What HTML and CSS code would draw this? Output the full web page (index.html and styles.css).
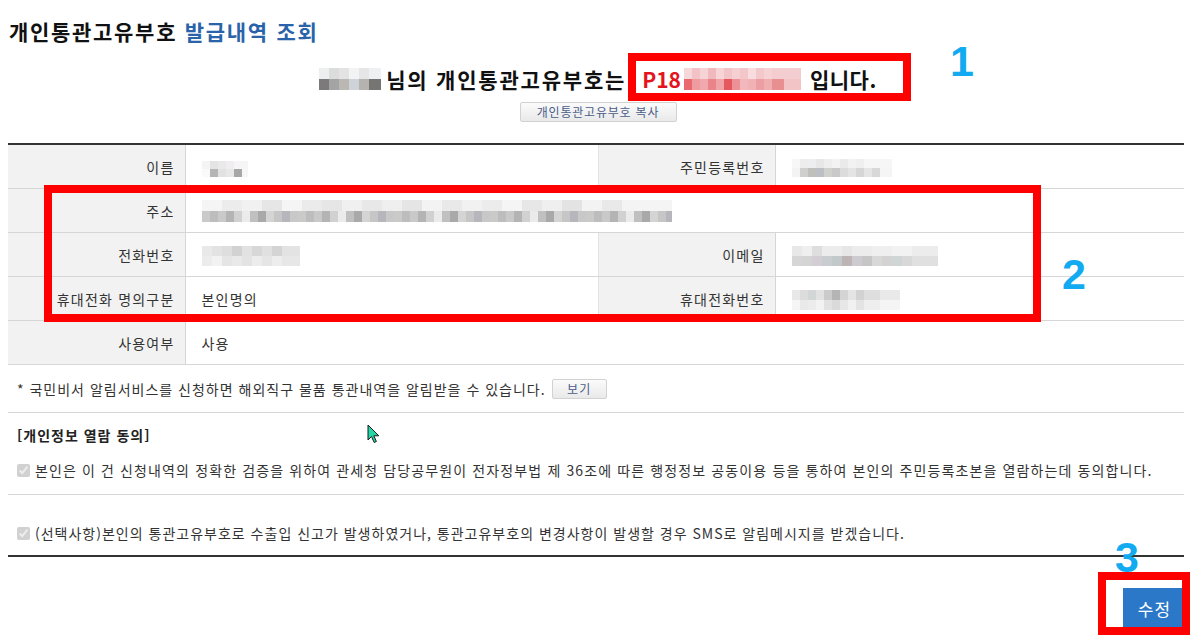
FILE: index.html
```html
<!DOCTYPE html>
<html lang="ko">
<head>
<meta charset="utf-8">
<title>개인통관고유부호 발급내역 조회</title>
<link rel="stylesheet" href="styles.css">
</head>
<body>
<div class="page">
  <h1 class="title">개인통관고유부호 <span class="title-blue">발급내역 조회</span></h1>

  <div class="summary">
    <span class="mosaic m-name-top"></span>
    <span class="sum-text">님의 개인통관고유부호는</span>
    <span class="code">P18<span class="mosaic m-code"></span></span>
    <span class="sum-end">입니다.</span>
  </div>
  <div class="copy-row">
    <button class="btn-gray btn-copy" type="button">개인통관고유부호 복사</button>
  </div>

  <table class="info">
    <colgroup>
      <col class="c-label"><col class="c-value"><col class="c-label"><col class="c-value">
    </colgroup>
    <tbody>
      <tr>
        <th>이름</th>
        <td><span class="mosaic m-name"></span></td>
        <th class="th-right">주민등록번호</th>
        <td><span class="mosaic m-rrn"></span></td>
      </tr>
      <tr>
        <th>주소</th>
        <td colspan="3"><span class="mosaic m-addr"></span></td>
      </tr>
      <tr>
        <th>전화번호</th>
        <td><span class="mosaic m-phone"></span></td>
        <th class="th-right">이메일</th>
        <td><span class="mosaic m-email"></span></td>
      </tr>
      <tr>
        <th>휴대전화 명의구분</th>
        <td>본인명의</td>
        <th class="th-right">휴대전화번호</th>
        <td><span class="mosaic m-mobile"></span></td>
      </tr>
      <tr>
        <th>사용여부</th>
        <td colspan="3">사용</td>
      </tr>
    </tbody>
  </table>

  <div class="notice">
    <span>* 국민비서 알림서비스를 신청하면 해외직구 물품 통관내역을 알림받을 수 있습니다.</span>
    <button class="btn-gray btn-view" type="button">보기</button>
  </div>

  <div class="agree">
    <div class="agree-title">[개인정보 열람 동의]</div>
    <label class="agree-item first">
      <input type="checkbox" checked disabled>
      <span>본인은 이 건 신청내역의 정확한 검증을 위하여 관세청 담당공무원이 전자정부법 제 36조에 따른 행정정보 공동이용 등을 통하여 본인의 주민등록초본을 열람하는데 동의합니다.</span>
    </label>
    <label class="agree-item second">
      <input type="checkbox" checked disabled>
      <span>(선택사항)본인의 통관고유부호로 수출입 신고가 발생하였거나, 통관고유부호의 변경사항이 발생할 경우 SMS로 알림메시지를 받겠습니다.</span>
    </label>
  </div>

  <div class="actions">
    <button class="btn-edit" type="button">수정</button>
  </div>
</div>

<div class="anno box1"></div>
<div class="anno box2"></div>
<div class="anno box3"></div>
<div class="num n1">1</div>
<div class="num n2">2</div>
<div class="num n3">3</div>
<svg class="cursor" width="14" height="20" viewBox="0 0 14 20">
  <path d="M1 1 L1 16 L4.5 12.5 L7.2 18.5 L9.4 17.5 L6.8 11.8 L11.8 11.8 Z" fill="#22d6a6" stroke="#1a1a1a" stroke-width="1"/>
</svg>
</body>
</html>
```

FILE: styles.css
```css
html, body {
  margin: 0;
  padding: 0;
  background: #ffffff;
}
body {
  margin: 8px;
  font-family: "Noto Sans CJK KR", "Noto Sans", "Liberation Sans", sans-serif;
  color: #333333;
  font-size: 14px;
}
.page {
  width: 1180px;
}

.title {
  margin: 8px 0 0 1px;
  font-size: 21px;
  line-height: 30px;
  font-weight: 700;
  color: #111111;
  letter-spacing: 1.7px;
}
.title-blue {
  color: #2a63a9;
}

.summary {
  margin-top: 18px;
  height: 30px;
  display: flex;
  justify-content: center;
  align-items: center;
  font-size: 21px;
  font-weight: 700;
  color: #111111;
}
.m-name-top {
  margin-right: 5px;
}
.sum-text {
  letter-spacing: 1.8px;
}
.sum-end {
  letter-spacing: 0.5px;
  margin-left: 9px;
}
.code {
  display: inline-flex;
  align-items: center;
  color: #e3141c;
  margin-left: 16px;
}

.copy-row {
  margin-top: 8px;
  display: flex;
  justify-content: center;
}
.btn-gray {
  font-family: "Noto Sans CJK KR", "Noto Sans", sans-serif;
  background: linear-gradient(#fbfbfb, #e9e9e9);
  border: 1px solid #d2d2d2;
  border-radius: 2px;
  color: #4a5d88;
  padding: 0;
  cursor: pointer;
}
.btn-copy {
  width: 157px;
  height: 20px;
  font-size: 12px;
  line-height: 18px;
  letter-spacing: 0.8px;
}

/* info table */
.info {
  margin-top: 21px;
  width: 1180px;
  border-collapse: collapse;
  table-layout: fixed;
  border-top: 2px solid #333333;
}
.c-label { width: 177px; }
.c-value { width: 413px; }
.info th,
.info td {
  height: 43px;
  padding: 0;
  border-bottom: 1px solid #d6d6d6;
  font-size: 14px;
  line-height: 20px;
  letter-spacing: 1.2px;
  color: #333333;
  vertical-align: middle;
}
.info th {
  background: #f2f2f2;
  font-weight: 400;
  text-align: right;
  padding-right: 10px;
  border-right: 1px solid #d6d6d6;
}
.info th.th-right {
  border-left: 1px solid #e2e2e2;
}
.info td {
  padding-left: 16px;
  text-align: left;
}

/* pixelated blur placeholders */
.mosaic {
  display: inline-block;
  vertical-align: middle;
  background-repeat: no-repeat;
  background-size: 100% 50%, 100% 50%;
  background-position: top left, bottom left;
}
.m-name-top {
  width: 62px;
  height: 22px;
  background-image:
    linear-gradient(90deg, #eceef0 0 10px, #dcdcdc 10px 20px, #e3e3e3 20px 30px, #f1f3f5 30px 40px, #e6e6e6 40px 50px, #eef0f2 50px 62px),
    linear-gradient(90deg, #7c7a7a 0 10px, #a4a4a4 10px 20px, #bbb8b4 20px 30px, #cdd3d8 30px 40px, #b5b3b0 40px 50px, #777574 50px 62px);
}
.m-code {
  width: 117px;
  height: 22px;
  margin-left: 3px;
  background-image:
    linear-gradient(90deg, #f6d8da 0 8px, #f3c2c6 8px 16px, #f6d3d5 16px 24px, #f0b9bd 24px 32px, #f7d5d7 32px 40px, #f2c4c7 40px 48px, #f5cfd2 48px 56px, #f3c6c9 56px 64px, #f8dcde 64px 72px, #f2c8cb 72px 80px, #f6d2d4 80px 88px, #f4cdd0 88px 117px),
    linear-gradient(90deg, #e9696e 0 8px, #ef9ca1 8px 16px, #f0a8ac 16px 24px, #e9858a 24px 32px, #f0a4a8 32px 40px, #e4585e 40px 48px, #ec9196 48px 56px, #f3b8bb 56px 64px, #f1b2b5 64px 72px, #eb9ea3 72px 80px, #f0aeb1 80px 88px, #e88f92 88px 100px, #f3c4c6 100px 117px);
}
.m-name {
  width: 46px;
  height: 16px;
  background-image:
    linear-gradient(90deg, #f4f4f4 0 8px, #e4e4e4 8px 16px, #e9e9e9 16px 24px, #f0edf0 24px 32px, #f5f5f5 32px 46px),
    linear-gradient(90deg, #fafafa 0 8px, #b5b5b5 8px 16px, #e2e2e2 16px 24px, #e8e8e8 24px 32px, #a7a7a7 32px 40px, #f6f6f6 40px 46px);
}
.m-rrn {
  width: 100px;
  height: 18px;
  background-image:
    linear-gradient(90deg, #f7f7f7 0 8px, #ededed 8px 16px, #eceeef 16px 24px, #e7e7e7 24px 32px, #eeeeee 32px 40px, #f3f3f3 40px 48px, #eaeaea 48px 56px, #f2f2f2 56px 64px, #efefef 64px 72px, #f6f6f6 72px 100px),
    linear-gradient(90deg, #f3f3f3 0 8px, #cfcfcf 8px 16px, #bfbfbb 16px 24px, #bcc0c4 24px 32px, #d0d0cc 32px 40px, #c9c9c9 40px 48px, #dcdcdc 48px 56px, #e4e4e4 56px 64px, #d6d6d6 64px 72px, #e5e5e5 72px 80px, #d8d8d8 80px 88px, #f5f5f5 88px 100px);
}
.m-addr {
  width: 470px;
  height: 22px;
  background-image:
    linear-gradient(90deg, #f5f5f5 0 20px, #ececec 20px 40px, #f1f1f1 40px 60px, #e6e6e6 60px 80px, #f5f5f5 80px 100px, #ebebeb 100px 120px, #e6e6e6 120px 140px, #f0f0f0 140px 160px, #e8e8e8 160px 180px, #efefef 180px 200px, #e5e5e5 200px 220px, #f3f3f3 220px 240px, #e9e9e9 240px 260px, #f1f1f1 260px 280px, #ececec 280px 300px, #f5f5f5 300px 320px, #e7e7e7 320px 340px, #efefef 340px 360px, #e3e3e3 360px 380px, #f3f3f3 380px 400px, #e9e9e9 400px 420px, #f4f4f4 420px 470px),
    repeating-linear-gradient(90deg, #cacaca 0 8px, #bdbdbd 8px 16px, #c9c9c9 16px 24px, #b4b4b4 24px 32px, #d1d1d1 32px 40px, #ebebeb 40px 48px, #c0c0c0 48px 56px, #a9a9a9 56px 64px, #d4d4d4 64px 72px, #c6c6c6 72px 80px, #b9b5bd 80px 88px, #c8c8c8 88px 96px);
}
.m-phone {
  width: 98px;
  height: 20px;
  background-image:
    linear-gradient(90deg, #e9e9e9 0 10px, #e3e3e3 10px 20px, #dedede 20px 30px, #d2d2d2 30px 40px, #e2e2e2 40px 50px, #d7d7d7 50px 60px, #e0e0e0 60px 70px, #d4d4d4 70px 80px, #e3e3e3 80px 98px),
    linear-gradient(90deg, #ececec 0 10px, #f2f2f2 10px 20px, #e5e5e5 20px 30px, #e9e9e9 30px 40px, #e3e3e3 40px 50px, #ececec 50px 60px, #e5e5e5 60px 70px, #ededed 70px 80px, #e7e7e7 80px 98px);
}
.m-email {
  width: 146px;
  height: 20px;
  background-image:
    linear-gradient(90deg, #e8e8e8 0 10px, #efefef 10px 20px, #dedede 20px 30px, #ececec 30px 50px, #e6e6e6 50px 60px, #ececec 60px 80px, #efefef 80px 100px, #f2f2f2 100px 120px, #ececec 120px 146px),
    linear-gradient(90deg, #d6d6d6 0 10px, #d4d4d4 10px 20px, #d2ced4 20px 30px, #c9cdcf 30px 40px, #c3c9ca 40px 50px, #bdb4b6 50px 60px, #cecbd0 60px 70px, #c6c6c6 70px 80px, #d8d8d8 80px 90px, #d3d3d3 90px 100px, #d0d6d6 100px 110px, #d8d8d8 110px 120px, #e0e0e0 120px 146px);
}
.m-mobile {
  width: 108px;
  height: 20px;
  background-image:
    linear-gradient(90deg, #e8e8e8 0 8px, #dcdcdc 8px 16px, #d3d6d6 16px 24px, #e2e2e2 24px 32px, #cbcbcb 32px 40px, #b5b5b5 40px 48px, #d4d4d4 48px 56px, #e4e4e4 56px 64px, #d2d2d2 64px 72px, #dedede 72px 88px, #e9e9e9 88px 108px),
    linear-gradient(90deg, #f5f5f5 0 8px, #e9e9e9 8px 16px, #ececec 16px 24px, #f2f2f2 24px 32px, #e2e2e2 32px 40px, #dadada 40px 48px, #e7e7e7 48px 56px, #f1f1f1 56px 64px, #e3e3e3 64px 72px, #eeeeee 72px 88px, #f4f4f4 88px 108px);
}

/* notice */
.notice {
  height: 47px;
  display: flex;
  align-items: center;
  padding-left: 9px;
  border-bottom: 1px solid #d6d6d6;
  font-size: 14px;
  letter-spacing: 1px;
  color: #333333;
}
.btn-view {
  width: 55px;
  height: 20px;
  margin-left: 6px;
  font-size: 12px;
  line-height: 18px;
  letter-spacing: 1px;
}

/* agreement */
.agree {
  border-bottom: 2px solid #333333;
}
.agree-title {
  padding: 12px 0 0 9px;
  line-height: 20px;
  height: 32px;
  font-size: 14px;
  letter-spacing: 1px;
  font-weight: 700;
  color: #222222;
}
.agree-item {
  display: flex;
  align-items: center;
  padding-left: 9px;
  line-height: 20px;
  font-size: 14px;
  letter-spacing: 1px;
  color: #333333;
}
.agree-item input {
  width: 13px;
  height: 13px;
  margin: 0 5px 0 0;
}
.agree-item.first {
  padding-top: 3px;
  padding-bottom: 14px;
  border-bottom: 1px solid #d6d6d6;
  letter-spacing: 1.12px;
}
.agree-item.second {
  padding-top: 28px;
  padding-bottom: 12px;
}

.actions {
  display: flex;
  justify-content: flex-end;
  padding: 31px 2px 0 0;
}
.btn-edit {
  width: 63px;
  height: 41px;
  border: 0;
  background: #2b78c9;
  color: #ffffff;
  font-family: "Noto Sans CJK KR", "Noto Sans", sans-serif;
  font-size: 17px;
  letter-spacing: 1px;
  cursor: pointer;
}

/* annotation overlays */
.anno {
  position: absolute;
  box-sizing: border-box;
  border: 8px solid #ff0000;
}
.box1 { left: 628px; top: 53px; width: 283px; height: 48px; }
.box2 { left: 44px; top: 185px; width: 997px; height: 137px; }
.box3 { left: 1098px; top: 572px; width: 92px; height: 63px; }

.num {
  position: absolute;
  font-family: "Liberation Sans", Arial, sans-serif;
  font-weight: 700;
  font-size: 43px;
  line-height: 1;
  color: #12aaf0;
}
.n1 { left: 950px; top: 40px; }
.n2 { left: 1062px; top: 253px; }
.n3 { left: 1115px; top: 536px; }

.cursor {
  position: absolute;
  left: 367px;
  top: 424px;
}
```
